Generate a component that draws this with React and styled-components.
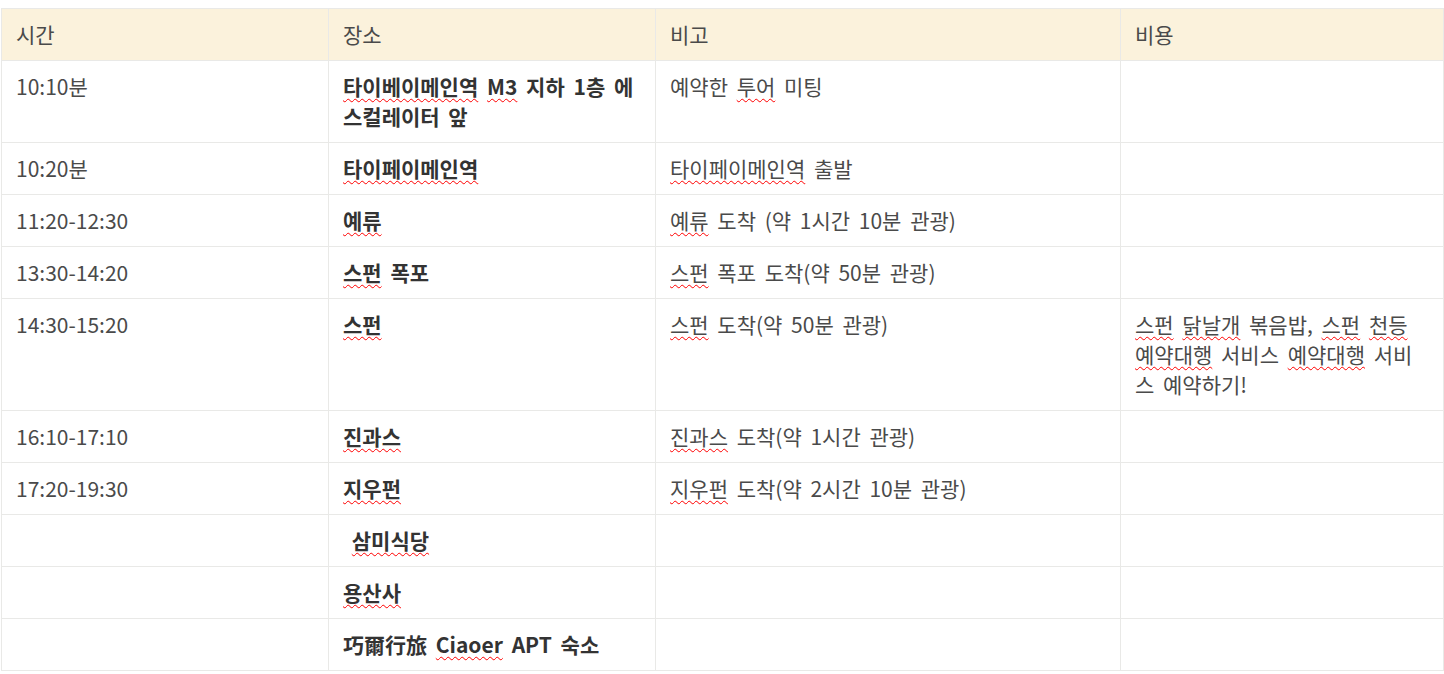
import React from 'react';
import styled, { createGlobalStyle } from 'styled-components';

const GlobalStyle = createGlobalStyle`
  body {
    margin: 0;
    background: #ffffff;
    font-family: "Noto Sans CJK KR", "Noto Sans", sans-serif;
  }
`;

const Page = styled.div`
  padding: 8px 0 0 1px;
  width: 1443px;
`;

const Table = styled.table`
  border-collapse: collapse;
  table-layout: fixed;
  width: 1442px;
  font-size: 21px;
  line-height: 30px;
  word-spacing: 4px;
  color: #4a4a4a;
`;

const HeadCell = styled.th`
  background: #fbf2dc;
  border: 1px solid #e9e9e7;
  font-weight: 400;
  text-align: left;
  padding: 10px 15px 11px 14px;
  height: 30px;
  color: #4a4a4a;
`;

const Cell = styled.td`
  border: 1px solid #e9e9e7;
  padding: 10px 15px 11px 14px;
  vertical-align: top;
  color: ${(p) => (p.$bold ? '#333' : '#4a4a4a')};
  font-weight: ${(p) => (p.$bold ? 700 : 400)};
  height: 30px;
`;

const Spell = styled.span`
  text-decoration: underline wavy #ff0000;
  text-decoration-thickness: 1px;
  text-underline-offset: 3px;
`;

const columns = [
  { label: '시간', width: 327 },
  { label: '장소', width: 327 },
  { label: '비고', width: 465 },
  { label: '비용', width: 323 },
];

const S = ({ children }) => <Spell>{children}</Spell>;

const rows = [
  {
    time: '10:10분',
    place: <><S>타이베이메인역</S> <S>M3</S> 지하 1층 에스컬레이터 앞</>,
    note: <>예약한 <S>투어</S> 미팅</>,
  },
  {
    time: '10:20분',
    place: <S>타이페이메인역</S>,
    note: <><S>타이페이메인역</S> 출발</>,
  },
  {
    time: '11:20-12:30',
    place: <S>예류</S>,
    note: <><S>예류</S> 도착 (약 1시간 10분 관광)</>,
  },
  {
    time: '13:30-14:20',
    place: <><S>스펀</S> 폭포</>,
    note: <><S>스펀</S> 폭포 도착(약 50분 관광)</>,
  },
  {
    time: '14:30-15:20',
    place: <S>스펀</S>,
    note: <><S>스펀</S> 도착(약 50분 관광)</>,
    cost: (
      <>
        <S>스펀</S> <S>닭날개</S> 볶음밥, <S>스펀</S> <S>천등</S> <S>예약대행</S> 서비스{' '}
        <S>예약대행</S> 서비스 예약하기!
      </>
    ),
  },
  {
    time: '16:10-17:10',
    place: <S>진과스</S>,
    note: <><S>진과스</S> 도착(약 1시간 관광)</>,
  },
  {
    time: '17:20-19:30',
    place: <S>지우펀</S>,
    note: <><S>지우펀</S> 도착(약 2시간 10분 관광)</>,
  },
  { time: '', place: <>&nbsp;<S>삼미식당</S></> },
  { time: '', place: <S>용산사</S> },
  { time: '', place: <>巧爾行旅 <S>Ciaoer</S> APT 숙소</> },
];

const App = () => (
  <Page>
    <GlobalStyle />
    <Table>
      <colgroup>
        {columns.map((c) => (
          <col key={c.label} style={{ width: c.width }} />
        ))}
      </colgroup>
      <thead>
        <tr>
          {columns.map((c) => (
            <HeadCell key={c.label}>{c.label}</HeadCell>
          ))}
        </tr>
      </thead>
      <tbody>
        {rows.map((r, i) => (
          <tr key={i}>
            <Cell>{r.time}</Cell>
            <Cell $bold>{r.place}</Cell>
            <Cell>{r.note}</Cell>
            <Cell>{r.cost}</Cell>
          </tr>
        ))}
      </tbody>
    </Table>
  </Page>
);

export default App;
